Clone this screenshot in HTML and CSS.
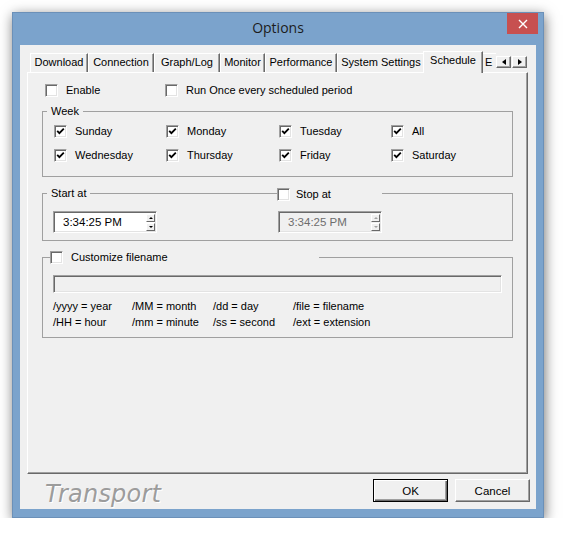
FILE: index.html
```html
<!DOCTYPE html>
<html>
	<head>
		<meta charset="utf-8">
		<title>Options</title>
		<link rel="stylesheet" href="styles.css">
	</head>

	<body>
		<div class="window">
			<div class="titlebar">
				<span></span>
				<span class="title">Options</span>
				<span class="close">
					<svg width="10" height="10" viewBox="0 0 10 10"><path d="M1 1 L9 9 M9 1 L1 9" stroke="#fff" stroke-width="1.4"/></svg>
				</span>
			</div>

			<div class="client">
				<div class="tabstrip">
					<span class="tab">Download</span>
					<span class="tab">Connection</span>
					<span class="tab">Graph/Log</span>
					<span class="tab">Monitor</span>
					<span class="tab">Performance</span>
					<span class="tab">System Settings</span>
					<span class="tab active">Schedule</span>
					<span class="tab cut">E</span>
					<span class="tab-scroll">
						<span class="sbtn"><i class="tri left"></i></span>
						<span class="sbtn"><i class="tri right"></i></span>
					</span>
				</div>

				<div class="panel">
					<div class="top-row">
						<label class="chk"><span class="cb"></span>Enable</label>
						<label class="chk"><span class="cb"></span>Run Once every scheduled period</label>
					</div>

					<fieldset class="group">
						<legend>Week</legend>
						<div class="week">
							<label class="chk"><span class="cb"><svg width="9" height="9" viewBox="0 0 9 9"><path d="M1.2 3.8 L3.4 6.2 L7.8 1.6" fill="none" stroke="#000" stroke-width="1.8"/></svg></span>Sunday</label>
							<label class="chk"><span class="cb"><svg width="9" height="9" viewBox="0 0 9 9"><path d="M1.2 3.8 L3.4 6.2 L7.8 1.6" fill="none" stroke="#000" stroke-width="1.8"/></svg></span>Monday</label>
							<label class="chk"><span class="cb"><svg width="9" height="9" viewBox="0 0 9 9"><path d="M1.2 3.8 L3.4 6.2 L7.8 1.6" fill="none" stroke="#000" stroke-width="1.8"/></svg></span>Tuesday</label>
							<label class="chk"><span class="cb"><svg width="9" height="9" viewBox="0 0 9 9"><path d="M1.2 3.8 L3.4 6.2 L7.8 1.6" fill="none" stroke="#000" stroke-width="1.8"/></svg></span>All</label>
							<label class="chk"><span class="cb"><svg width="9" height="9" viewBox="0 0 9 9"><path d="M1.2 3.8 L3.4 6.2 L7.8 1.6" fill="none" stroke="#000" stroke-width="1.8"/></svg></span>Wednesday</label>
							<label class="chk"><span class="cb"><svg width="9" height="9" viewBox="0 0 9 9"><path d="M1.2 3.8 L3.4 6.2 L7.8 1.6" fill="none" stroke="#000" stroke-width="1.8"/></svg></span>Thursday</label>
							<label class="chk"><span class="cb"><svg width="9" height="9" viewBox="0 0 9 9"><path d="M1.2 3.8 L3.4 6.2 L7.8 1.6" fill="none" stroke="#000" stroke-width="1.8"/></svg></span>Friday</label>
							<label class="chk"><span class="cb"><svg width="9" height="9" viewBox="0 0 9 9"><path d="M1.2 3.8 L3.4 6.2 L7.8 1.6" fill="none" stroke="#000" stroke-width="1.8"/></svg></span>Saturday</label>
						</div>
					</fieldset>

					<fieldset class="group">
						<legend>Start at</legend>
						<div class="times">
							<div class="timefield">
								<span class="val">3:34:25 PM</span>
								<span class="spin"><span class="sp"><i class="tri up"></i></span><span class="sp"><i class="tri down"></i></span></span>
							</div>
							<div class="timefield disabled">
								<span class="val">3:34:25 PM</span>
								<span class="spin"><span class="sp"><i class="tri up"></i></span><span class="sp"><i class="tri down"></i></span></span>
							</div>
							<label class="chk stop"><span class="cb"></span>Stop at</label>
						</div>
					</fieldset>

					<fieldset class="group">
						<legend class="chk wide"><span class="cb"></span>Customize filename</legend>
						<div class="custom">
							<div class="textfield"></div>
							<div class="codes">
								<span>/yyyy = year</span>
								<span>/MM = month</span>
								<span>/dd = day</span>
								<span>/file = filename</span>
								<span>/HH = hour</span>
								<span>/mm = minute</span>
								<span>/ss = second</span>
								<span>/ext = extension</span>
							</div>
						</div>
					</fieldset>
				</div>

				<div class="footer">
					<span class="brand">Transport</span>
					<button class="btn default">OK</button>
					<button class="btn">Cancel</button>
				</div>
			</div>
		</div>
	</body>
</html>
```

FILE: styles.css
```css
html,body {
	margin: 0;
	padding: 0;
	background-color: #fff;
}

body {
	font-family: "Liberation Sans", Arial, sans-serif;
	font-size: 11px;
	color: #000;
}

.window {
	margin: 12px 0 0 12px;
	width: 532px;
	height: 506px;
	box-sizing: border-box;
	display: flex;
	flex-direction: column;
	padding: 0 7px 8px 7px;
	background-color: #7ba3cc;
	border: 1px solid #6b90b8;
	box-shadow: 1px 3px 12px rgba(0,0,0,.55);
}

.titlebar {
	display: grid;
	grid-template-columns: 1fr auto 1fr;
	height: 32px;
	margin: 0 -7px;
}

.title {
	font-family: "Open Sans", sans-serif;
	font-size: 14px;
	line-height: 30px;
	color: #1c1c1c;
}

.close {
	justify-self: end;
	width: 31px;
	height: 21px;
	margin: 0 5px 0 0;
	display: flex;
	align-items: center;
	justify-content: center;
	background-color: #c75050;
}

.client {
	flex: 1;
	display: flex;
	flex-direction: column;
	background-color: #f0f0f0;
}

/* tabs */

.tabstrip {
	display: flex;
	align-items: flex-end;
	height: 21px;
	margin: 6px 0 0 10px;
}

.tab {
	flex: none;
	height: 19px;
	box-sizing: border-box;
	padding: 0;
	text-align: center;
	line-height: 17px;
	white-space: nowrap;
	border-top: 1px solid #fff;
	border-left: 1px solid #fff;
	border-right: 1px solid #696969;
	box-shadow: inset -1px 0 #a0a0a0;
}

.tab:nth-child(1) { width: 58px; }
.tab:nth-child(2) { width: 66px; }
.tab:nth-child(3) { width: 66px; }
.tab:nth-child(4) { width: 45px; }
.tab:nth-child(5) { width: 72px; }
.tab:nth-child(6) { width: 88px; }

.tab.active {
	position: relative;
	z-index: 1;
	width: 60px;
	height: 22px;
	margin: 0 -2px -1px -2px;
	background-color: #f0f0f0;
}

.tab.cut {
	width: 15px;
	padding-left: 3px;
	text-align: left;
	overflow: hidden;
	border-right: 0;
	box-shadow: none;
}

.tab-scroll {
	display: flex;
	gap: 1px;
	align-self: flex-start;
	margin-top: 5px;
}

.sbtn {
	width: 15px;
	height: 12px;
	box-sizing: border-box;
	display: flex;
	align-items: center;
	justify-content: center;
	background-color: #f0f0f0;
	border: 1px solid;
	border-color: #fff #696969 #696969 #fff;
	box-shadow: inset -1px -1px #a0a0a0;
}

.tri {
	width: 0;
	height: 0;
	border: 0 solid transparent;
}

.tri.left { border-width: 3px 4px 3px 0; border-right-color: #000; }
.tri.right { border-width: 3px 0 3px 4px; border-left-color: #000; }
.tri.up { border-width: 0 2px 2px 2px; border-bottom-color: #000; }
.tri.down { border-width: 2px 2px 0 2px; border-top-color: #000; }

.panel {
	height: 402px;
	box-sizing: border-box;
	margin: 0 8px 0 7px;
	border: 1px solid;
	border-color: #fff #696969 #696969 #fff;
	box-shadow: inset -1px -1px #a0a0a0;
}

/* checkboxes */

.chk {
	display: flex;
	align-items: center;
	gap: 8px;
	height: 13px;
	line-height: 13px;
	white-space: nowrap;
}

.cb {
	width: 13px;
	height: 13px;
	flex: none;
	box-sizing: border-box;
	display: flex;
	align-items: center;
	justify-content: center;
	background-color: #fff;
	border: 1px solid;
	border-color: #a0a0a0 #fff #fff #a0a0a0;
	box-shadow: inset 1px 1px #696969, inset -1px -1px #e3e3e3;
}

.top-row {
	display: grid;
	grid-template-columns: 120px auto;
	margin: 11px 0 0 17px;
}

/* group boxes */

.group {
	width: 471px;
	box-sizing: border-box;
	margin: 8px 0 0 14px;
	padding: 0;
	min-inline-size: 0;
	border: 1px solid #a0a0a0;
}

.group + .group {
	margin-top: 10px;
}

.group legend {
	margin-left: 4px;
	padding: 0 4px;
	line-height: 13px;
}

.group legend.wide {
	width: 269px;
	margin-left: 7px;
	padding: 0;
	box-sizing: border-box;
}

.week {
	display: grid;
	grid-template-columns: 112px 113px 112px auto;
	row-gap: 11px;
	padding: 7px 0 14px 11px;
}

.times {
	position: relative;
	display: grid;
	grid-template-columns: 225px auto;
	padding: 11px 0 7px 10px;
}

.stop {
	position: absolute;
	left: 234px;
	top: -12px;
	width: 105px;
	gap: 6px;
	background-color: #f0f0f0;
}

.timefield {
	width: 104px;
	height: 22px;
	box-sizing: border-box;
	display: flex;
	align-items: center;
	justify-content: space-between;
	padding: 0 1px 0 9px;
	background-color: #fff;
	border: 1px solid;
	border-color: #a0a0a0 #fff #fff #a0a0a0;
	box-shadow: inset 1px 1px #696969, inset -1px -1px #e3e3e3;
	font-size: 11.5px;
}

.timefield.disabled {
	background-color: #f0f0f0;
	color: #6d6d6d;
}

.timefield.disabled .tri.up { border-bottom-color: #a0a0a0; }
.timefield.disabled .tri.down { border-top-color: #a0a0a0; }

.spin {
	display: flex;
	flex-direction: column;
	gap: 1px;
}

.sp {
	width: 9px;
	height: 8px;
	box-sizing: border-box;
	display: flex;
	align-items: center;
	justify-content: center;
	background-color: #f0f0f0;
	border: 1px solid;
	border-color: #fff #696969 #696969 #fff;
}

.custom {
	padding: 11px 0 7px 10px;
}

.textfield {
	width: 449px;
	height: 18px;
	box-sizing: border-box;
	background-color: #f0f0f0;
	border: 1px solid;
	border-color: #a0a0a0 #fff #fff #a0a0a0;
	box-shadow: inset 1px 1px #696969, inset -1px -1px #e3e3e3;
}

.codes {
	display: grid;
	grid-template-columns: 79px 81px 80px auto;
	margin-top: 5px;
	line-height: 16px;
}

/* footer */

.footer {
	flex: 1;
	display: flex;
	align-items: flex-start;
	gap: 7px;
	padding: 5px 6px 0 25px;
}

.brand {
	margin: 3px auto 0 0;
	font-family: "DejaVu Sans", sans-serif;
	font-style: italic;
	font-size: 24px;
	line-height: 24px;
	letter-spacing: 0.2px;
	color: #9c9c9c;
	text-shadow: 1px 1px 0 #fff;
}

.btn {
	width: 75px;
	height: 23px;
	padding: 0;
	font-family: inherit;
	font-size: 11.5px;
	color: #000;
	background-color: #f0f0f0;
	border: 1px solid;
	border-color: #fff #696969 #696969 #fff;
	box-shadow: inset -1px -1px #a0a0a0;
}

.btn.default {
	border: 1px solid #000;
	box-shadow: inset 1px 1px #fff, inset -1px -1px #696969, inset -2px -2px #a0a0a0;
}
```
